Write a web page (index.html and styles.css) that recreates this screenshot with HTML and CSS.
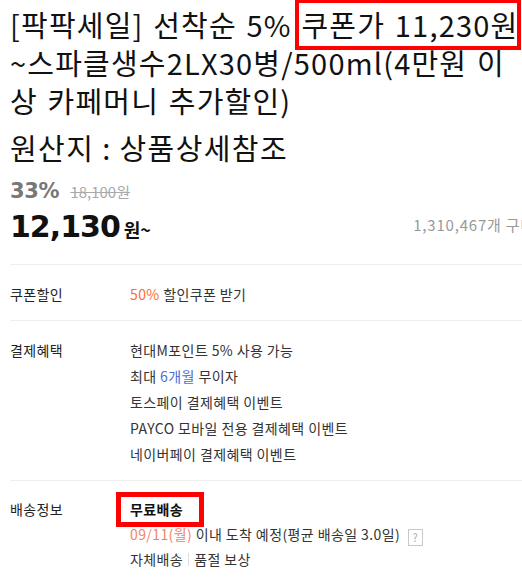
FILE: index.html
```html
<!DOCTYPE html>
<html>
<head>
  <title>팍팍세일 스파클생수</title>
  <link rel="stylesheet" href="styles.css">
</head>
<body>
  <div class="product">
    <h1 class="product-title">[팍팍세일] 선착순 5% <span class="mark mark-title">쿠폰가 11,230원</span> ~스파클생수2LX30병/500ml(4만원 이상 카페머니 추가할인)</h1>
    <p class="product-origin">원산지 : 상품상세참조</p>

    <div class="price-box">
      <div class="discount">
        <span class="discount-rate">33%</span>
        <span class="price-original">18,100원</span>
      </div>
      <div class="price-row">
        <span class="price">12,130<span class="price-unit">원~</span></span>
        <span class="sold-count">1,310,467개 구매</span>
      </div>
    </div>

    <div class="info-row">
      <div class="info-label">쿠폰할인</div>
      <div class="info-value">
        <div><span class="accent">50%</span> 할인쿠폰 받기</div>
      </div>
    </div>

    <div class="info-row">
      <div class="info-label">결제혜택</div>
      <div class="info-value">
        <div>현대M포인트 5% 사용 가능</div>
        <div>최대 <span class="blue">6개월</span> 무이자</div>
        <div>토스페이 결제혜택 이벤트</div>
        <div>PAYCO 모바일 전용 결제혜택 이벤트</div>
        <div>네이버페이 결제혜택 이벤트</div>
      </div>
    </div>

    <div class="info-row delivery">
      <div class="info-label">배송정보</div>
      <div class="info-value">
        <div><strong class="mark mark-free">무료배송</strong></div>
        <div><span class="date">09/11(월)</span> 이내 도착 예정(평균 배송일 3.0일) <span class="help">?</span></div>
        <div>자체배송<span class="sep"></span>품절 보상</div>
      </div>
    </div>
  </div>
</body>
</html>
```

FILE: styles.css
```css
body {
  margin: 0;
  font-family: "Noto Sans CJK KR", "Noto Sans", sans-serif;
  color: #222;
  background-color: #fff;
  overflow: hidden;
}

.product {
  width: 525px;
  padding: 0 0 0 10px;
}

.product-title {
  width: 514px;
  margin: 0;
  padding-top: 5px;
  font-size: 29px;
  font-weight: normal;
  line-height: 38px;
  letter-spacing: 1.2px;
  word-spacing: 2px;
  color: #111;
}

.mark {
  position: relative;
}

.mark::after {
  content: "";
  position: absolute;
  border: 4px solid #ff0000;
  pointer-events: none;
}

.mark-title::after {
  left: -6px;
  right: -3px;
  top: -4px;
  bottom: -5px;
}

.product-origin {
  margin: 0;
  padding-top: 9px;
  font-size: 29px;
  line-height: 38px;
  letter-spacing: 1.4px;
  color: #111;
}

.price-box {
  padding: 13px 0 16px;
  border-bottom: 1px solid #eee;
}

.discount {
  display: flex;
  align-items: baseline;
  gap: 11px;
  line-height: 24px;
}

.discount-rate {
  font-size: 21px;
  font-weight: bold;
  color: #777;
  font-family: "DejaVu Sans", sans-serif;
  letter-spacing: -0.3px;
}

.price-original {
  font-size: 15px;
  color: #aaa;
  text-decoration: line-through;
}

.price-row {
  display: flex;
  align-items: center;
  margin-top: 4px;
}

.price {
  font-family: "DejaVu Sans", sans-serif;
  font-size: 30px;
  font-weight: bold;
  line-height: 38px;
  color: #111;
  letter-spacing: -1px;
}

.price-unit {
  margin-left: 4px;
  font-family: "Noto Sans CJK KR", sans-serif;
  font-size: 18px;
  letter-spacing: 0;
}

.sold-count {
  flex-shrink: 0;
  margin: 0 0 8px auto;
  font-size: 15px;
  color: #999;
  white-space: nowrap;
  letter-spacing: 0.8px;
}

.info-row {
  display: grid;
  grid-template-columns: 120px 1fr;
  padding: 16px 0 13px;
  border-bottom: 1px solid #eee;
  font-size: 14px;
  line-height: 26px;
  letter-spacing: 0.4px;
}

.info-label {
  color: #222;
}

.info-value {
  color: #333;
}

.accent {
  color: #ff6d2e;
}

.blue {
  color: #4a6ed1;
}

.delivery {
  border-bottom: none;
  line-height: 25px;
}

.mark-free {
  font-weight: bold;
  color: #111;
}

.mark-free::after {
  left: -14px;
  right: -21px;
  top: -7px;
  bottom: -8px;
  border-width: 5px;
}

.date {
  color: #f4845f;
}

.help {
  display: inline-block;
  width: 13px;
  height: 15px;
  margin-left: 4px;
  border: 1px solid #c8c8c8;
  font-size: 11px;
  line-height: 15px;
  text-align: center;
  color: #aaa;
  vertical-align: -2px;
  letter-spacing: 0;
}

.sep {
  display: inline-block;
  width: 1px;
  height: 13px;
  margin: 0 5px;
  background-color: #ddd;
  vertical-align: -1px;
}
```
